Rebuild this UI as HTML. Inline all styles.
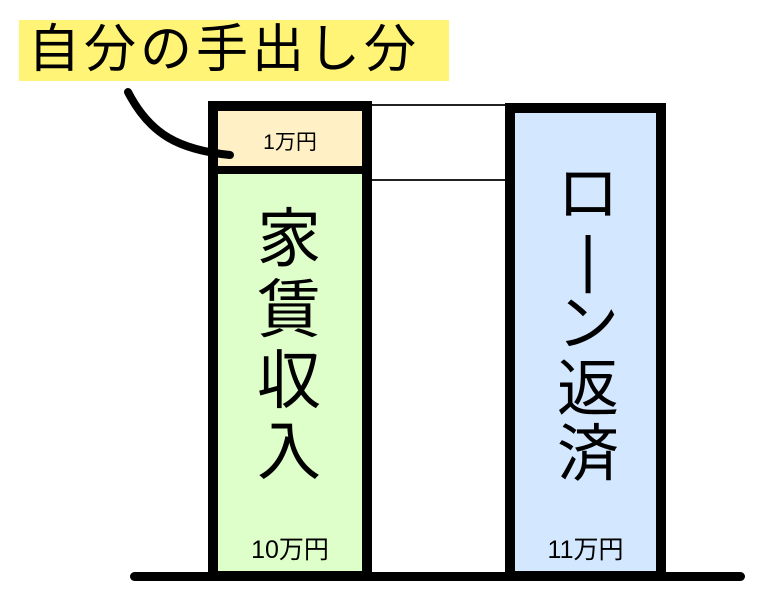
<!DOCTYPE html>
<html><head><meta charset="utf-8"><style>
body{margin:0;width:767px;height:598px;background:#fff;position:relative;overflow:hidden;font-family:"Liberation Sans","Noto Sans CJK JP",sans-serif;color:#000}
div{position:absolute;box-sizing:border-box}
.c{position:absolute;text-align:center;white-space:pre}
</style></head><body>
<div style="left:19px;top:20px;width:430px;height:61px;background:#fff475"></div>
<div style="left:28px;top:20px;height:61px;font-size:52px;line-height:61px;letter-spacing:4px;white-space:nowrap">自分の手出し分</div>
<svg style="position:absolute;left:0;top:0" width="767" height="598">
<line x1="372" y1="105" x2="505" y2="105" stroke="#222" stroke-width="2"/>
<line x1="372" y1="180" x2="505" y2="180" stroke="#222" stroke-width="2"/></svg>
<div style="left:208px;top:101px;width:164px;height:480px;background:#dfffca;border:10px solid #000"></div>
<div style="left:218px;top:111px;width:144px;height:63px;background:#fff0c5;border-bottom:8px solid #000;font-size:21px;text-align:center;line-height:63px">1万円</div>
<div style="left:505px;top:103px;width:161px;height:478px;background:#d3e8ff;border:10px solid #000"></div>
<div class="c" style="left:249px;top:204px;width:80px;font-size:64px;line-height:71px">家
賃
収
入</div>
<div class="c" style="left:548px;top:162px;width:80px;font-size:62px;line-height:65px">ロ
|
ン
返
済</div>
<div style="left:208px;top:530px;width:164px;text-align:center;font-size:25px">10万円</div>
<div style="left:505px;top:530px;width:161px;text-align:center;font-size:25px">11万円</div>
<div style="left:130px;top:572px;width:615px;height:9px;background:#000;border-radius:5px"></div>
<svg style="position:absolute;left:0;top:0" width="767" height="598"><path d="M128 92 C150 135 180 150 230 155" fill="none" stroke="#000" stroke-width="8" stroke-linecap="round"/></svg>
</body></html>
